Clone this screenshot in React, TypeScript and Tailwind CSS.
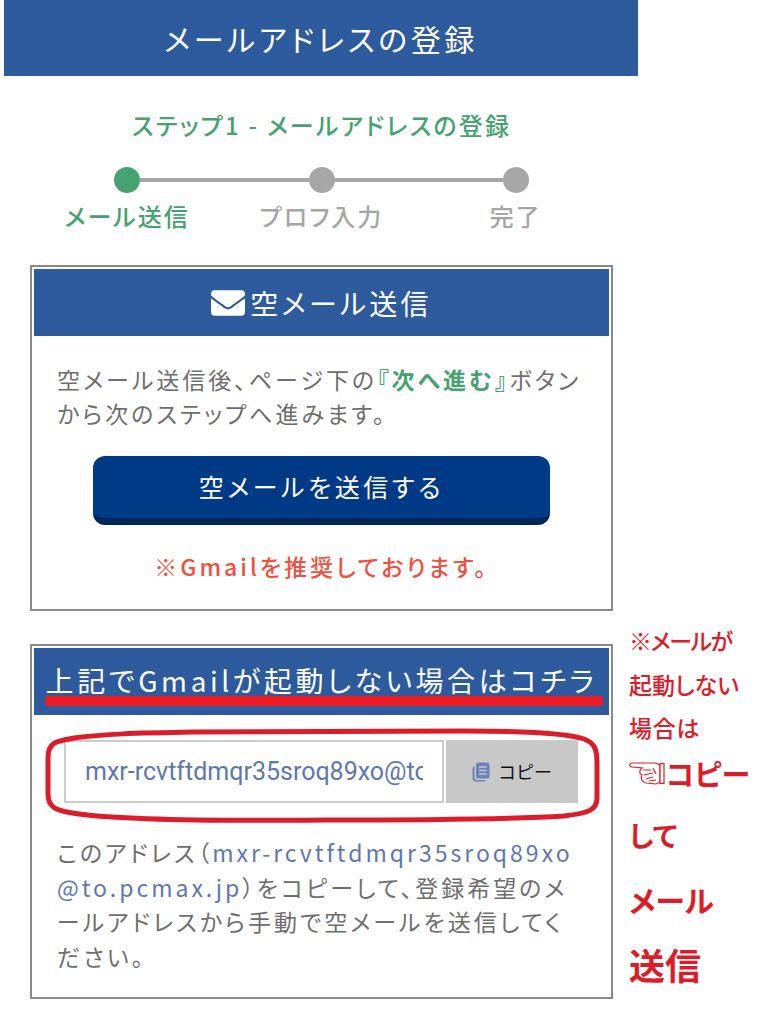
import { FaEnvelope } from "react-icons/fa";

const font = "font-['Noto_Sans_CJK_JP','Noto_Sans',sans-serif] [font-feature-settings:'palt']";

const steps = [
  { label: "メール送信", active: true },
  { label: "プロフ入力", active: false },
  { label: "完了", active: false },
];

const Stepper = () => (
  <div className="mt-[23px]">
    <div className="flex items-center px-[84px]">
      {steps.map((s, i) => (
        <div key={s.label} className={i < 2 ? "flex flex-1 items-center" : "flex items-center"}>
          <span className={`block w-[26px] h-[26px] rounded-full ${s.active ? "bg-[#46a271]" : "bg-[#a6a6a6]"}`} />
          {i < 2 && <span className="block flex-1 h-[4px] bg-[#a6a6a6]" />}
        </div>
      ))}
    </div>
    <div className="grid grid-cols-3 mt-[6px]">
      {steps.map((s) => (
        <p key={s.label} className={`text-center text-[24px] leading-[34px] font-medium tracking-[2px] ${s.active ? "text-[#46a271]" : "text-[#a6a6a6]"}`}>
          {s.label}
        </p>
      ))}
    </div>
  </div>
);

const CopyIcon = () => (
  <svg className="mr-[8px]" width="18" height="20" viewBox="0 0 18 20" fill="none">
    <path d="M2.5 4 C1 4.5 0.5 5.5 0.5 7 L0.5 16 C0.5 18.5 2 19.5 4 19.5 L11 19.5 C12.5 19.5 13.5 19 14 18 L5 18 C3.5 18 2.5 17 2.5 15.5 Z" fill="#6a83ba" />
    <rect x="4" y="0.5" width="13.5" height="16" rx="2.5" fill="#6a83ba" />
    <path d="M7 5 H14.5 M7 8.5 H14.5 M7 12 H14.5" stroke="#c8c8c8" strokeWidth="1.4" />
  </svg>
);

const HandIcon = () => (
  <svg className="shrink-0 mr-[1px]" width="36" height="24" viewBox="0 0 36 24" fill="none" stroke="#dd1c2a" strokeWidth="1.2">
    <path d="M17 1 L3 1 C0 1 0 5 3 5 L13 6 C10 8 10 12 13 13 C11 16 13 20 17 21 L27 22 L31 20 L31 3 L26 1 Z" fill="#ffffff" />
    <rect x="31" y="1.5" width="4" height="20" fill="#ffffff" />
    <path d="M14 8 L22 8 M15 13 L24 11 M17 17 L24 15 M24 6 L27 12 M20 19 L27 18" />
  </svg>
);

const App = () => {
  return (
    <div className={`relative w-[757px] h-[1024px] overflow-hidden bg-white ${font}`}>
      <header className="ml-[4px] w-[634px] h-[76px] bg-[#2e5a9e] flex items-center justify-center text-white text-[30px] tracking-[3.6px]">
        メールアドレスの登録
      </header>

      <div className="ml-[30px] w-[583px]">
        <h2 className="mt-[30px] text-center text-[#46a271] text-[24px] leading-[38px] font-medium tracking-[2.2px]">
          ステップ1 - メールアドレスの登録
        </h2>
        <Stepper />

        <section className="mt-[32px] h-[346px] border-2 border-[#8a8a8a] p-[2px]">
          <div className="h-[67px] bg-[#2e5a9e] flex items-center justify-center text-white text-[28px] tracking-[3.2px]">
            <FaEnvelope className="text-[34px] mr-[5px]" />
            空メール送信
          </div>
          <p className="mt-[26px] mx-[23px] text-[#6e6e6e] text-[23px] leading-[34px] tracking-[3px] whitespace-nowrap">
            空メール送信後、ページ下の<b className="font-bold text-[#46a271]">『次へ進む』</b>ボタン
            <br />
            から次のステップへ進みます。
          </p>
          <button className="block mx-auto mt-[26px] w-[457px] h-[69px] rounded-[12px] bg-[#003a86] border-b-[7px] border-[#00255a] text-white text-[25px] tracking-[3.6px]">
            空メールを送信する
          </button>
          <p className="mt-[23px] text-center text-[#f0503f] text-[23px] leading-[36px] font-medium tracking-[3px]">
            ※Gmailを推奨しております。
          </p>
        </section>

        <section className="relative mt-[33px] h-[355px] border-2 border-[#8a8a8a] p-[2px]">
          <div className="h-[67px] bg-[#2e5a9e] flex items-start justify-center pt-[13px] text-white text-[28px] leading-[38px] tracking-[3.6px] whitespace-nowrap">
            上記でGmailが起動しない場合はコチラ
          </div>
          <div className="flex mt-[25px] ml-[30px] h-[63px]">
            <div className="w-[380px] border-2 border-[#cccccc] flex items-center pl-[19px] pr-[19px] text-[#5f77ad] text-[25px] font-['Roboto',sans-serif] whitespace-nowrap">
              <span className="block w-full overflow-hidden">mxr-rcvtftdmqr35sroq89xo@to.pcmax.jp</span>
            </div>
            <div className="w-[132px] ml-[2px] bg-[#c8c8c8] flex items-center justify-center text-[#111111] text-[18px] [font-feature-settings:normal]">
              <CopyIcon />
              コピー
            </div>
          </div>
          <p className="mt-[32px] mx-[23px] text-[#6e6e6e] text-[23px] leading-[34.5px] tracking-[3px] whitespace-nowrap">
            このアドレス（<span className="text-[#5f77ad]">mxr-rcvtftdmqr35sroq89xo</span>
            <br />
            <span className="text-[#5f77ad]">@to.pcmax.jp</span>）をコピーして、登録希望のメ
            <br />
            ールアドレスから手動で空メールを送信してく
            <br />
            ださい。
          </p>
          {/* hand drawn markup over the card */}
          <span className="absolute left-[13px] top-[50px] w-[558px] h-[10px] rounded-[3px] bg-[#ec1c24]" />
          <svg className="absolute left-[12px] top-[82px]" width="556" height="96" viewBox="0 0 556 96" fill="none">
            <path
              d="M4 30 C4 14 12 13 30 10 C60 6 90 5 150 4 L420 3 C480 3 525 6 540 11 C551 15 553 22 553 35 L553 70 C553 82 545 85 520 88 C470 91 380 92 280 92 C180 93 80 92 35 86 C12 83 4 80 4 66 Z"
              stroke="#dc1c2a"
              strokeWidth="5"
            />
          </svg>
        </section>
      </div>

      <aside className="absolute left-[629px] top-[620px] text-[#dd1c2a] font-medium whitespace-nowrap">
        <p className="h-[44px] text-[23px] leading-[40px] tracking-[-1.4px]">※メールが</p>
        <p className="h-[43px] text-[23px] leading-[40px]">起動しない</p>
        <p className="h-[44px] text-[23px] leading-[40px] tracking-[0.8px]">場合は</p>
        <p className="flex items-center h-[46px] text-[29px] font-bold">
          <HandIcon />コピー
        </p>
        <p className="text-[28px] h-[66px] leading-[77px] font-bold">して</p>
        <p className="text-[30px] h-[68px] leading-[72px] font-bold">メール</p>
        <p className="text-[36px] h-[66px] leading-[66px] font-bold">送信</p>
      </aside>
    </div>
  );
};

export default App;
